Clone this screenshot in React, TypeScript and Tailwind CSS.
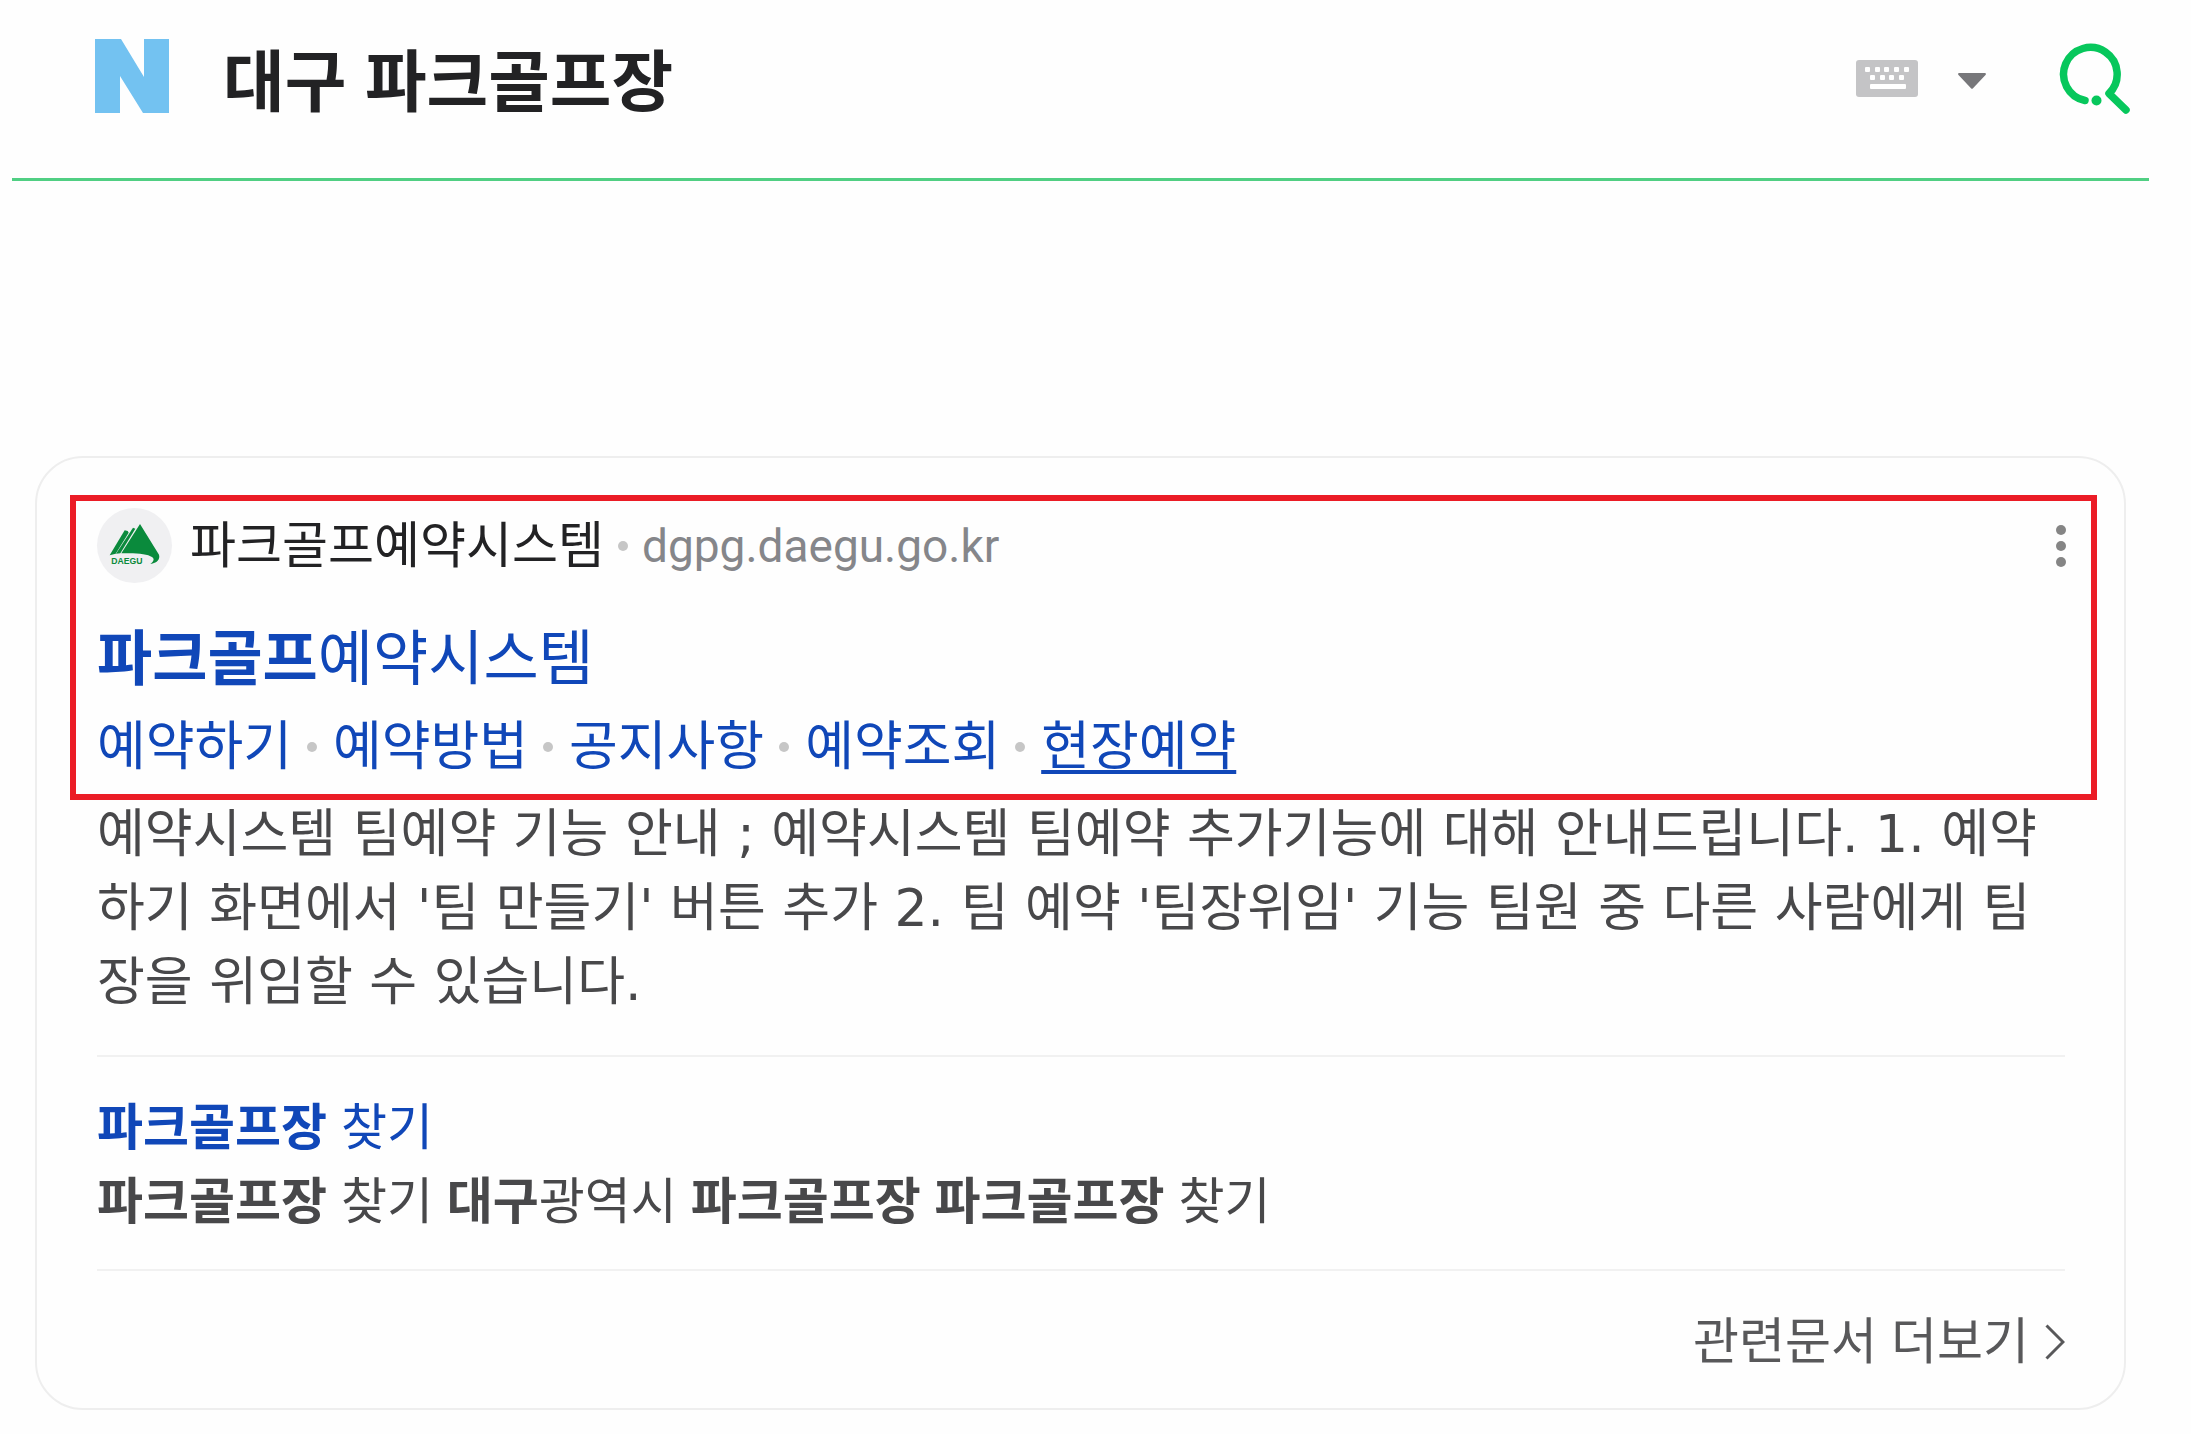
import { useState } from "react";

const quickLinks = ["예약하기", "예약방법", "공지사항", "예약조회", "현장예약"];

function Dot() {
  return <span className="h-[10px] w-[10px] shrink-0 rounded-full bg-[#c6c6c6]" />;
}

function SearchHeader() {
  const [query, setQuery] = useState("대구 파크골프장");

  return (
    <header className="mr-[42px] ml-3 flex h-[181px] items-start border-b-3 border-[#50cf83] pr-[18px] pl-[83px]">
      <a href="#" aria-label="N" className="mt-[39px] shrink-0">
        <svg viewBox="0 0 74 74" className="h-[74px] w-[74px]" fill="#73c2f1">
          <path d="M0 0h26l23 38V0h25v74H48L25 37v37H0z" />
        </svg>
      </a>
      <input
        type="text"
        aria-label="검색어"
        value={query}
        onChange={(e) => setQuery(e.target.value)}
        className="mt-[35px] ml-[54px] h-24 min-w-0 flex-1 bg-transparent text-[67px] font-bold text-[#222224] outline-none"
      />
      <button type="button" aria-label="키보드" className="mt-[60px] shrink-0">
        <svg viewBox="0 0 62 37" className="h-[37px] w-[62px]">
          <rect width="62" height="37" rx="3" fill="#c4c4c6" />
          <g fill="#fff">
            <rect x="9" y="7" width="5" height="5" rx="1" />
            <rect x="19" y="7" width="5" height="5" rx="1" />
            <rect x="28" y="7" width="5" height="5" rx="1" />
            <rect x="38" y="7" width="5" height="5" rx="1" />
            <rect x="48" y="7" width="5" height="5" rx="1" />
            <rect x="14" y="15" width="5" height="5" rx="1" />
            <rect x="24" y="15" width="5" height="5" rx="1" />
            <rect x="33" y="15" width="5" height="5" rx="1" />
            <rect x="43" y="15" width="5" height="5" rx="1" />
            <rect x="14" y="24" width="36" height="5" rx="1" />
          </g>
        </svg>
      </button>
      <button type="button" aria-label="자동완성" className="mt-[73px] ml-10 shrink-0">
        <svg viewBox="0 0 28 16" className="h-4 w-7" fill="#77777a">
          <path d="M1.500 0h25c1.500 0 1.800 1.200 1 2L15 15.300c-.6.700-1.400.700-2 0L.5 2C-.3 1.200 0 0 1.500 0z" />
        </svg>
      </button>
      <button type="button" aria-label="검색" className="mt-[43px] ml-[73px] shrink-0">
        <svg
          viewBox="0 0 72 72"
          className="h-[72px] w-[72px]"
          fill="none"
          stroke="#07c75c"
          strokeWidth="7.500"
          strokeLinecap="round"
          strokeLinejoin="round"
        >
          <path d="M26 57.500A26.800 26.800 0 1 1 50 50.500L67 67" />
          <circle cx="37.500" cy="57.500" r="5" fill="#07c75c" stroke="none" />
        </svg>
      </button>
    </header>
  );
}

function DaeguIcon() {
  return (
    <span className="flex h-[75px] w-[75px] shrink-0 items-center justify-center rounded-full bg-[#f0f0f2]">
      <svg viewBox="0 0 225 225" className="h-full w-full">
        <g fill="#0a8a3c">
          <path d="M129 48l57 92c4 14-6 25-26 28 11-8 13-16 5-21-14-10-50-13-92-11z" />
          <path d="M108 59l7 3-45 74-13 1z" />
          <path d="M83 67l9 2 3 5-39 63-18 5z" />
        </g>
        <text
          x="43"
          y="169"
          fontSize="26"
          fontWeight="700"
          fill="#0a8a3c"
          className="font-['Liberation_Sans',sans-serif]"
        >
          DAEGU
        </text>
      </svg>
    </span>
  );
}

function ResultCard() {
  return (
    <section className="mr-[65px] ml-[35px] rounded-[48px] border-2 border-[#eeeeee] pt-[37px] pr-[27px] pb-[29px] pl-[33px]">
      {/* highlighted part of the result */}
      <div className="border-6 border-[#eb1c26] pt-[7px] pr-[25px] pb-[11px] pl-[21px]">
        <div className="flex h-[75px] items-center">
          <DaeguIcon />
          <span className="ml-[18px] text-[50px] leading-[72px] text-[#222224]">
            파크골프예약시스템
          </span>
          <span className="mx-[14px] flex">
            <Dot />
          </span>
          <span className="font-[Roboto,sans-serif] text-[46px] leading-[72px] text-[#85868a]">
            dgpg.daegu.go.kr
          </span>
          <button type="button" aria-label="더보기" className="ml-auto">
            <svg viewBox="0 0 10 42" className="h-[42px] w-[10px]" fill="#858585">
              <circle cx="5" cy="5" r="5" />
              <circle cx="5" cy="21" r="5" />
              <circle cx="5" cy="37" r="5" />
            </svg>
          </button>
        </div>
        <h2 className="mt-[41px] text-[60px] leading-[72px] text-[#1047b8]">
          <a href="#">
            <b>파크골프</b>예약시스템
          </a>
        </h2>
        <ul className="mt-[15px] flex items-center text-[53px] leading-[72px] text-[#1047b8]">
          {quickLinks.map((link, i) => (
            <li key={link} className="flex items-center">
              {i > 0 && (
                <span className="mr-4 ml-[15px] flex">
                  <Dot />
                </span>
              )}
              <a
                href="#"
                className={
                  i === quickLinks.length - 1
                    ? "underline decoration-4 underline-offset-[5px] [text-decoration-skip-ink:none]"
                    : ""
                }
              >
                {link}
              </a>
            </li>
          ))}
        </ul>
      </div>

      <div className="-mt-[3px] pr-8 pl-[27px] text-[#48484a]">
        <p className="font-['DejaVu_Sans','Noto_Sans_CJK_KR',sans-serif] text-[52px] leading-[74px]">
          예약시스템 팀예약 기능 안내 ; 예약시스템 팀예약 추가기능에 대해 안내드립니다. 1.
          예약하기 화면에서 '팀 만들기' 버튼 추가 2. 팀 예약 '팀장위임' 기능 팀원 중 다른
          사람에게 팀장을 위임할 수 있습니다.
        </p>

        <div className="mt-9 border-y-2 border-[#f1f1f1] pt-[34px] pb-[30px] text-[50px] leading-[74px]">
          <a href="#" className="block text-[#1047b8]">
            <b>파크골프장</b> 찾기
          </a>
          <p>
            <b>파크골프장</b> 찾기 <b>대구</b>광역시 <b>파크골프장</b> <b>파크골프장</b> 찾기
          </p>
        </div>

        <div className="flex justify-end pt-[34px]">
          <a href="#" className="flex items-center text-[50px] leading-[74px] text-[#58585a]">
            관련문서 더보기
            <svg
              viewBox="0 0 20 36"
              className="ml-4 h-9 w-5"
              fill="none"
              stroke="currentColor"
              strokeWidth="3"
            >
              <path d="M1.500 1.500L18 18 1.500 34.500" />
            </svg>
          </a>
        </div>
      </div>
    </section>
  );
}

function App() {
  return (
    <main className="min-h-screen bg-[#fefefe] pb-6 font-['Liberation_Sans','Noto_Sans_CJK_KR',sans-serif]">
      <SearchHeader />
      <div className="mt-[275px]">
        <ResultCard />
      </div>
    </main>
  );
}

export default App;
